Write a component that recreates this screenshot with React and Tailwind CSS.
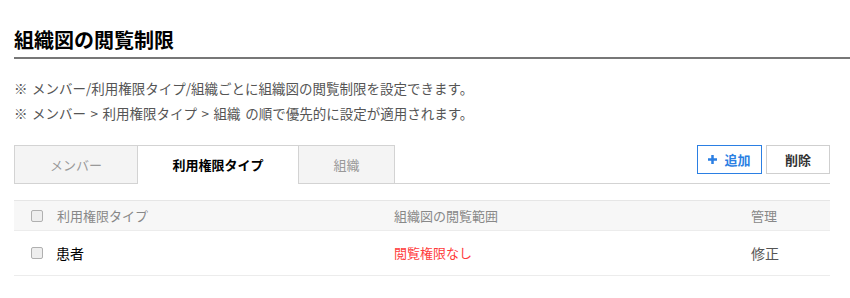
import React from 'react';

const Checkbox = () => (
  <span className="inline-block w-[12px] h-[12px] rounded-[2px] border border-[#b0b0b0] bg-[#eeeeee]" />
);

export default function App() {
  return (
    <div className="w-[850px] h-[298px] bg-white overflow-hidden font-['Noto_Sans_CJK_JP',sans-serif]">
      {/* title */}
      <div className="pt-[26px] pl-[14px]">
        <h1 className="text-[20px] leading-[27px] font-bold text-black pb-[4px] border-b-2 border-[#777]">
          組織図の閲覧制限
        </h1>
      </div>

      <div className="px-[14px] w-[844px]">
        {/* notes */}
        <div className="mt-[17px] text-[13.5px] leading-[25px] text-[#555] [word-spacing:1.5px]">
          <p>※ メンバー/利用権限タイプ/組織ごとに組織図の閲覧制限を設定できます。</p>
          <p>※ メンバー &gt; 利用権限タイプ &gt; 組織 の順で優先的に設定が適用されます。</p>
        </div>

        {/* tabs + buttons */}
        <div className="mt-[19px] flex h-[39px] text-[13px]">
          <div className="w-[124px] border border-[#d3d3d3] bg-[#f4f4f4] text-[#999] flex items-center justify-center">
            メンバー
          </div>
          <div className="w-[160px] border-t border-[#d3d3d3] bg-white text-black font-bold flex items-center justify-center">
            利用権限タイプ
          </div>
          <div className="w-[97px] border border-[#d3d3d3] bg-[#f4f4f4] text-[#999] flex items-center justify-center">
            組織
          </div>
          <div className="flex-1 border-b border-[#d3d3d3] flex justify-end items-start gap-[4px]">
            <button className="w-[65px] h-[29px] border border-[#2b7fe3] bg-white text-[#2b7fe3] font-bold flex items-center justify-center gap-[7px]">
              <svg width="9" height="9" viewBox="0 0 9 9">
                <rect x="3.25" y="0" width="2.5" height="9" fill="#2b7fe3" />
                <rect x="0" y="3.25" width="9" height="2.5" fill="#2b7fe3" />
              </svg>
              追加
            </button>
            <button className="w-[64px] h-[29px] border border-[#cfcfcf] bg-white text-[#333] font-bold flex items-center justify-center">
              削除
            </button>
          </div>
        </div>

        {/* table */}
        <div className="mt-[16px] w-[816px]">
          <div className="h-[30px] border-t border-[#e6e6e6] bg-[#f7f7f7] flex items-center text-[13px] text-[#888]">
            <div className="w-[43px] pl-[17px] flex items-center"><Checkbox /></div>
            <div className="w-[337px]">利用権限タイプ</div>
            <div className="w-[357px]">組織図の閲覧範囲</div>
            <div className="flex-1">管理</div>
          </div>
          <div className="h-[46px] border-t border-b border-[#ececec] flex items-center text-[14px]">
            <div className="w-[42px] pl-[17px] flex items-center"><Checkbox /></div>
            <div className="w-[338px] text-black">患者</div>
            <div className="w-[357px] text-[13px] text-[#ff3b3b]">閲覧権限なし</div>
            <div className="flex-1 text-[#555]">修正</div>
          </div>
        </div>
      </div>
    </div>
  );
}
